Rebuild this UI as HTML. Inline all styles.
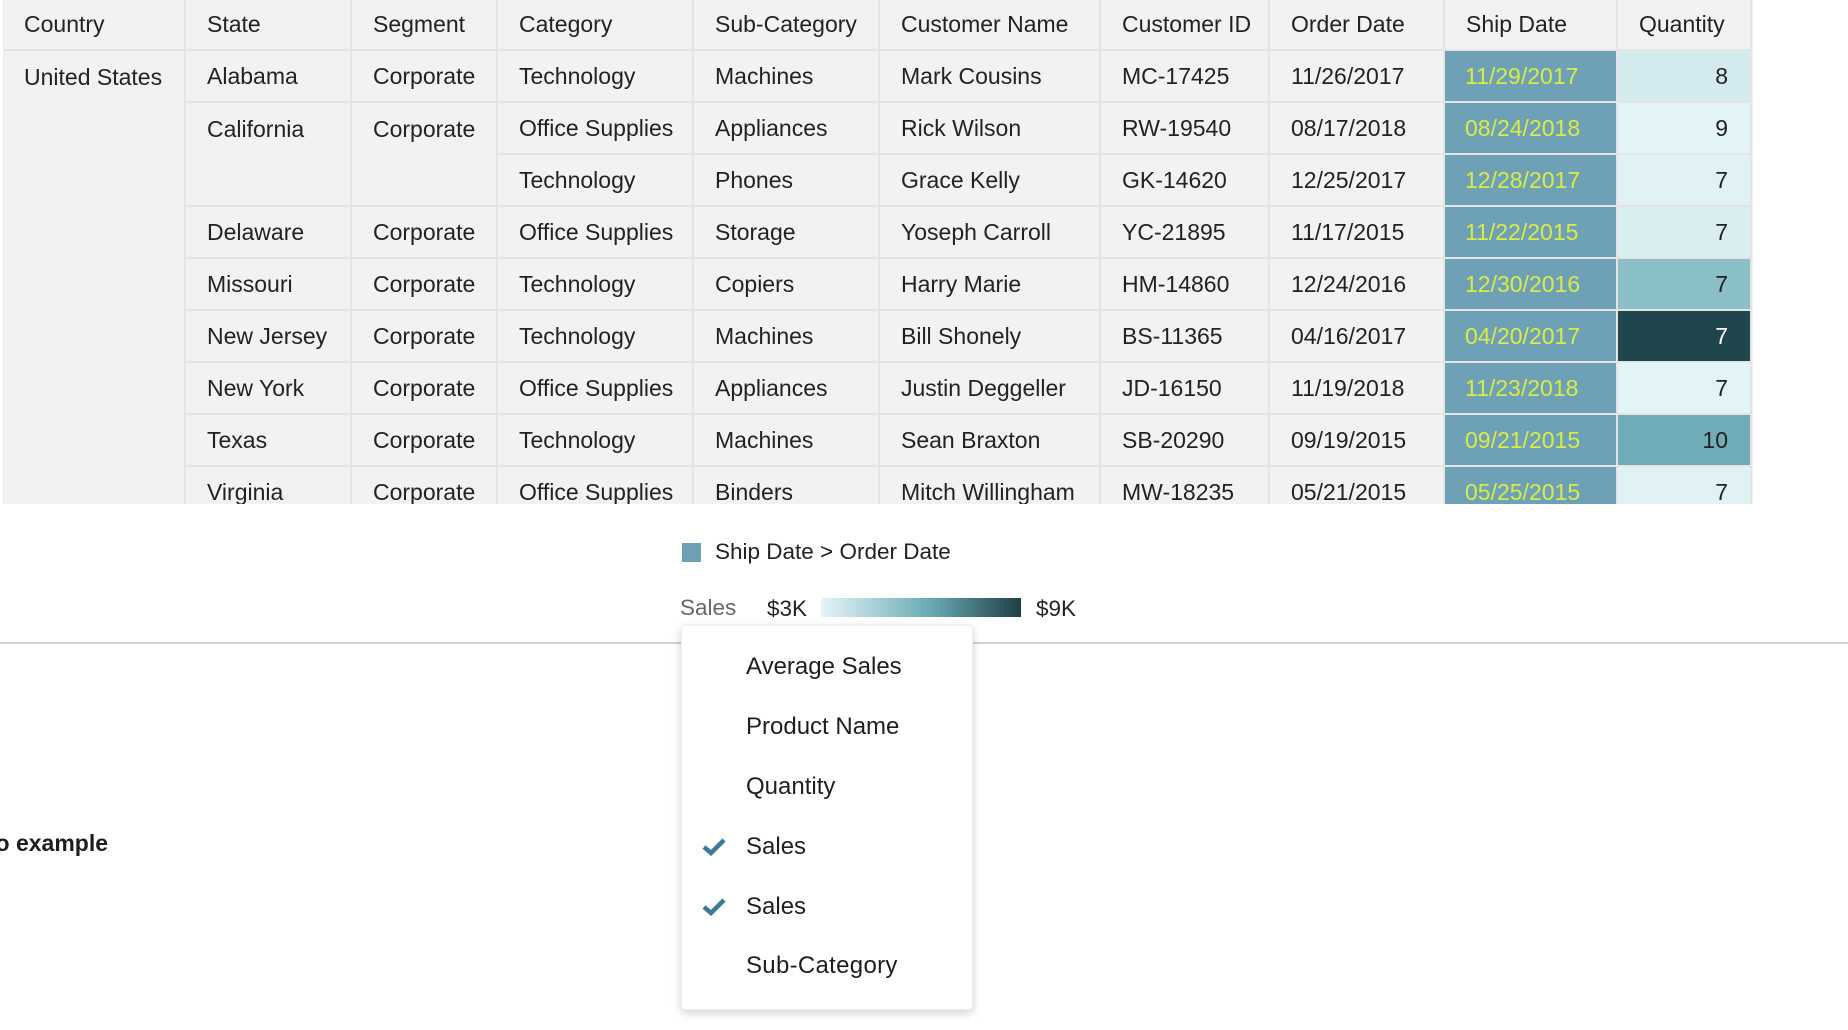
<!DOCTYPE html>
<html><head><meta charset="utf-8"><style>
html,body{margin:0;padding:0;width:1848px;height:1030px;overflow:hidden;background:#fff;font-family:"Liberation Sans",sans-serif;color:#222}
.wrap{position:absolute;left:3px;top:0;width:1750px;height:504px;overflow:hidden;background:#f2f2f2}
table{border-collapse:collapse;table-layout:fixed;font-size:23px}
tr{height:52px}
tr.h{height:50px}
td{border:2px solid #e4e4e4;padding:0 0 0 21px;white-space:nowrap;vertical-align:middle;background:#f2f2f2;overflow:hidden}
tr.h td{border-top:none}
td.top{vertical-align:top;padding-top:13px}
td.s{background:#6fa1b6;color:#d8ec45;padding-left:20px}
td.q{text-align:right;padding:0 22px 0 0}
.leg{position:absolute;font-size:22.5px;color:#222}
.menu{position:absolute;left:681px;top:625px;width:290px;height:383px;background:#fff;border-radius:4px;box-shadow:0 3px 10px rgba(0,0,0,.18);border:1px solid #eee}
.mi{position:absolute;left:64px;font-size:24px;color:#1e1e1e}
.ck{position:absolute;left:20px}
</style></head><body>
<div class="wrap"><table>
<colgroup><col style="width:182px"><col style="width:166px"><col style="width:146px"><col style="width:196px"><col style="width:186px"><col style="width:221px"><col style="width:169px"><col style="width:175px"><col style="width:173px"><col style="width:134px"></colgroup>
<tr class="h"><td style="border-left:none">Country</td><td>State</td><td>Segment</td><td>Category</td><td>Sub-Category</td><td>Customer Name</td><td>Customer ID</td><td>Order Date</td><td>Ship Date</td><td>Quantity</td></tr>
<tr><td rowspan="9" class="top" style="border-left:none;border-bottom:none">United States</td><td>Alabama</td><td>Corporate</td><td>Technology</td><td>Machines</td><td>Mark Cousins</td><td>MC-17425</td><td>11/26/2017</td><td class="s">11/29/2017</td><td class="q" style="background:#d3eaee">8</td></tr>
<tr><td rowspan="2" class="top">California</td><td rowspan="2" class="top">Corporate</td><td>Office Supplies</td><td>Appliances</td><td>Rick Wilson</td><td>RW-19540</td><td>08/17/2018</td><td class="s">08/24/2018</td><td class="q" style="background:#e2f4f7">9</td></tr>
<tr><td>Technology</td><td>Phones</td><td>Grace Kelly</td><td>GK-14620</td><td>12/25/2017</td><td class="s">12/28/2017</td><td class="q" style="background:#e0f2f5">7</td></tr>
<tr><td>Delaware</td><td>Corporate</td><td>Office Supplies</td><td>Storage</td><td>Yoseph Carroll</td><td>YC-21895</td><td>11/17/2015</td><td class="s">11/22/2015</td><td class="q" style="background:#d8eef1">7</td></tr>
<tr><td>Missouri</td><td>Corporate</td><td>Technology</td><td>Copiers</td><td>Harry Marie</td><td>HM-14860</td><td>12/24/2016</td><td class="s">12/30/2016</td><td class="q" style="background:#8abfc8">7</td></tr>
<tr><td>New Jersey</td><td>Corporate</td><td>Technology</td><td>Machines</td><td>Bill Shonely</td><td>BS-11365</td><td>04/16/2017</td><td class="s">04/20/2017</td><td class="q" style="background:#20464d;color:#fff">7</td></tr>
<tr><td>New York</td><td>Corporate</td><td>Office Supplies</td><td>Appliances</td><td>Justin Deggeller</td><td>JD-16150</td><td>11/19/2018</td><td class="s">11/23/2018</td><td class="q" style="background:#e2f4f7">7</td></tr>
<tr><td>Texas</td><td>Corporate</td><td>Technology</td><td>Machines</td><td>Sean Braxton</td><td>SB-20290</td><td>09/19/2015</td><td class="s">09/21/2015</td><td class="q" style="background:#70adb8">10</td></tr>
<tr><td>Virginia</td><td>Corporate</td><td>Office Supplies</td><td>Binders</td><td>Mitch Willingham</td><td>MW-18235</td><td>05/21/2015</td><td class="s">05/25/2015</td><td class="q" style="background:#e0f2f5">7</td></tr>
</table></div>
<div style="position:absolute;left:682px;top:543px;width:19px;height:19px;background:#6fa1b6"></div>
<div class="leg" style="left:715px;top:539px">Ship Date &gt; Order Date</div>
<div class="leg" style="left:680px;top:595px;color:#666">Sales</div>
<div class="leg" style="left:767px;top:596px">$3K</div>
<div style="position:absolute;left:821px;top:598px;width:200px;height:19px;background:linear-gradient(to right,#e4f5f8,#6aa9b3 55%,#1f3f45)"></div>
<div class="leg" style="left:1036px;top:596px">$9K</div>
<div style="position:absolute;left:0;top:642px;width:1848px;height:2px;background:#d4d4d4"></div>
<div style="position:absolute;right:1740px;top:830px;font-size:23px;font-weight:bold;color:#1e1e1e;white-space:nowrap">to example</div>
<div class="menu">
<div class="mi" style="top:27px">Average Sales</div>
<div class="mi" style="top:87px">Product Name</div>
<div class="mi" style="top:147px">Quantity</div>
<svg class="ck" style="top:210px" width="24" height="20" viewBox="0 0 24 20"><path d="M2 11 L9 17 L22 4" fill="none" stroke="#3d7a96" stroke-width="4.5"/></svg>
<div class="mi" style="top:207px">Sales</div>
<svg class="ck" style="top:270px" width="24" height="20" viewBox="0 0 24 20"><path d="M2 11 L9 17 L22 4" fill="none" stroke="#3d7a96" stroke-width="4.5"/></svg>
<div class="mi" style="top:267px">Sales</div>
<div class="mi" style="top:326px;letter-spacing:0.3px">Sub-Category</div>
</div>
</body></html>
